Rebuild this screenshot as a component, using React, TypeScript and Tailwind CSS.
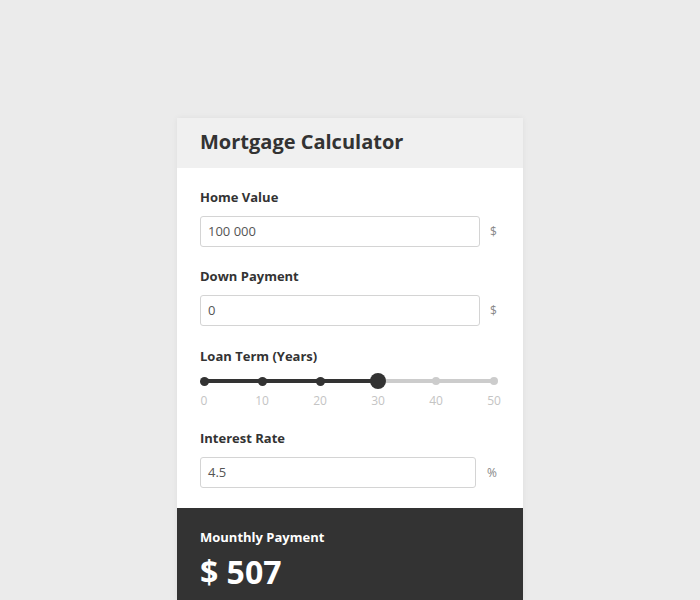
import React from "react";

const font = { fontFamily: '"Open Sans", "Liberation Sans", sans-serif' };

function Field({ label, value, unit, narrow }: { label: string; value: string; unit: string; narrow?: boolean }) {
  return (
    <div>
      <div className="text-[13px] leading-[18px] font-bold text-[#333]">{label}</div>
      <div className="mt-[10px] flex items-center">
        <div
          className={`h-[31px] ${narrow ? "w-[276px]" : "w-[280px]"} rounded-[3px] border border-[#d4d4d4] bg-white px-[7px] flex items-center text-[13px] text-[#555]`}
        >
          {value}
        </div>
        <div className={`${narrow ? "ml-[11px]" : "ml-[10px]"} text-[12px] text-[#888]`}>{unit}</div>
      </div>
    </div>
  );
}

function Slider() {
  const ticks = [0, 10, 20, 30, 40, 50];
  return (
    <div className="mt-[8px] w-[298px]">
      <div className="relative h-[16px] mx-[4px]">
        <div className="absolute left-0 right-0 top-[6px] h-[4px] rounded bg-[#cccccc]" />
        <div className="absolute left-0 w-[60%] top-[6px] h-[4px] bg-[#333333]" />
        {ticks.map((t, i) => (
          <div
            key={t}
            className={`absolute rounded-full ${
              i === 3
                ? "w-[16px] h-[16px] top-0 bg-[#333333]"
                : i < 3
                ? "w-[9px] h-[9px] top-[3.5px] bg-[#333333]"
                : "w-[8px] h-[8px] top-[4px] bg-[#cccccc]"
            }`}
            style={{ left: `calc(${i * 20}% - ${i === 3 ? 8 : i < 3 ? 4.5 : 4}px)` }}
          />
        ))}
      </div>
      <div className="relative h-[16px] mt-[4px] mx-[4px]">
        {ticks.map((t, i) => (
          <div
            key={t}
            className="absolute w-[30px] -ml-[15px] text-center text-[12px] leading-[16px] text-[#c4c4c4]"
            style={{ left: `${i * 20}%` }}
          >
            {t}
          </div>
        ))}
      </div>
    </div>
  );
}

export default function App() {
  return (
    <div className="min-h-[600px] w-full bg-[#ebebeb] flex justify-center pt-[118px]" style={font}>
      <div className="w-[346px] shadow-[0_0_6px_rgba(0,0,0,0.06)] self-start">
        <div className="h-[50px] bg-[#f0f0f0] px-[23px] flex items-center">
          <div className="text-[20px] font-bold text-[#333] leading-none -mt-[2px]">Mortgage Calculator</div>
        </div>
        <div className="bg-white px-[23px] pt-[20px] pb-[20px]">
          <Field label="Home Value" value="100 000" unit="$" />
          <div className="mt-[20px]">
            <Field label="Down Payment" value="0" unit="$" />
          </div>
          <div className="mt-[21px]">
            <div className="text-[13px] leading-[18px] font-bold text-[#333]">Loan Term (Years)</div>
            <Slider />
          </div>
          <div className="mt-[20px]">
            <Field label="Interest Rate" value="4.5" unit="%" narrow />
          </div>
        </div>
        <div className="bg-[#333333] px-[23px] pt-[20px] h-[92px]">
          <div className="text-[13px] leading-[18px] font-bold text-white">Mounthly Payment</div>
          <div className="mt-[8px] text-[32px] leading-[36px] font-bold text-white">$ 507</div>
        </div>
      </div>
    </div>
  );
}
